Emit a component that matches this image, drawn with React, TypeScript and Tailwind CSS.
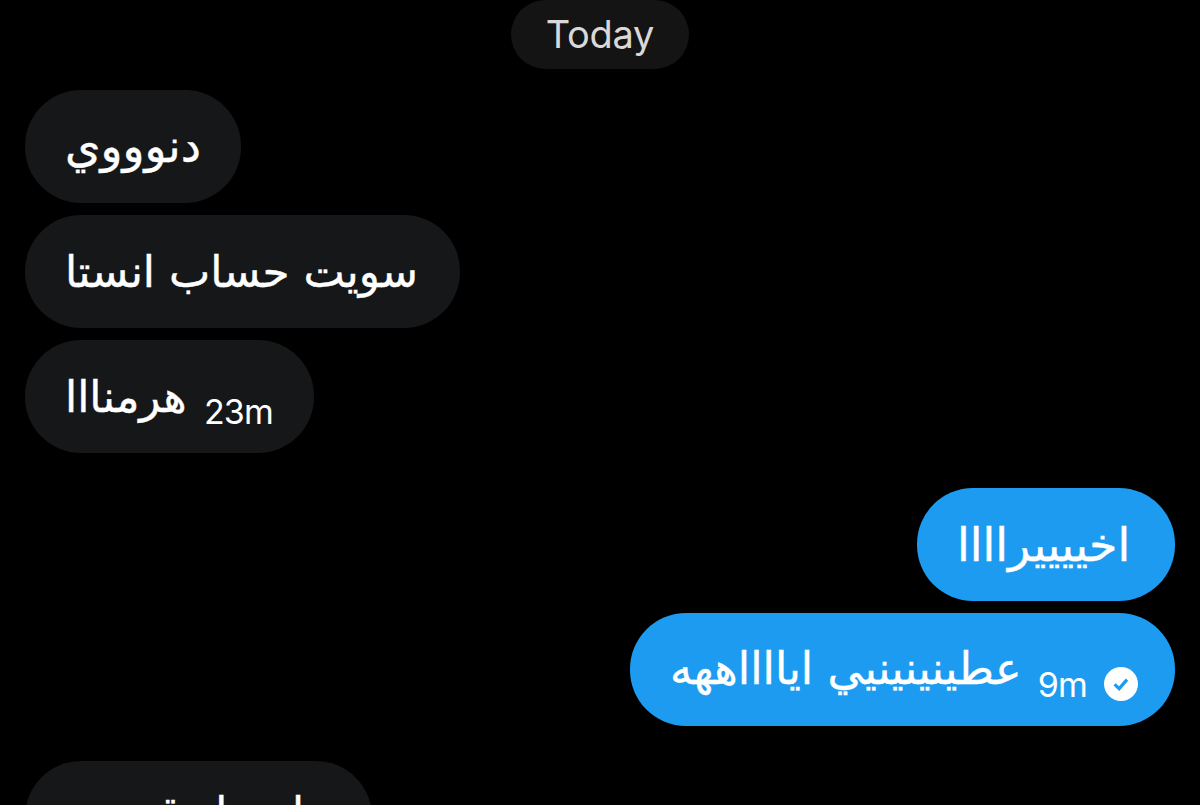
import React from "react";

interface Message {
  text: string;
  mine?: boolean;
  time?: string;
  box: string;
  size: string;
}

const messages: Message[] = [
  { text: "دنوووي", box: "w-[216px]", size: "text-[45.5px]" },
  { text: "سويت حساب انستا", box: "w-[435px] mt-3", size: "text-[43.8px]" },
  { text: "هرمنااا", time: "23m", box: "w-[289px] mt-3", size: "text-[43.8px]" },
  { text: "اخييييراااا", mine: true, box: "w-[258px] mt-[35px]", size: "text-[46px]" },
  { text: "عطينينينيي ايااااههه", mine: true, time: "9m", box: "w-[545px] mt-3", size: "text-[44.5px]" },
  { text: "تعا سبا وقسيت", box: "w-[347px] mt-[35px] pb-2", size: "text-[43.5px]" },
];

function Bubble({ text, mine, time, box, size }: Message) {
  return (
    <div
      className={`flex h-[113px] shrink-0 items-center rounded-[56px] pl-[40px] text-white ${box} ${
        mine ? "self-end bg-[#1d9bf0]" : "self-start bg-[#161719]"
      }`}
    >
      <span
        dir="rtl"
        className={`whitespace-nowrap font-['DejaVu_Sans',sans-serif] leading-none [-webkit-text-stroke:0.4px_white] ${size}`}
      >
        {text}
      </span>
      {time && (
        <span className="ml-auto mt-[30px] text-[34px] leading-none tracking-[-0.8px]">{time}</span>
      )}
      {time && !mine && <span className="w-[41px]" />}
      {mine && time && (
        <svg viewBox="0 0 34 34" className="ml-[17px] mr-[37px] mt-7 size-[34px] shrink-0">
          <circle cx="17" cy="17" r="17" fill="white" />
          <path d="M10.6 17.3l4.6 4.3 7.8-9" fill="none" stroke="#1d9bf0" strokeWidth="3.2" />
        </svg>
      )}
    </div>
  );
}

export default function App() {
  return (
    <div className="flex h-[805px] flex-col overflow-hidden bg-black px-[25px] font-['Inter',sans-serif]">
      <div className="mb-[21px] flex h-[69px] w-[178px] shrink-0 items-center justify-center self-center rounded-[35px] bg-[#141414] text-[38px] tracking-[-0.3px] text-[#d9d9d9]">
        Today
      </div>
      {messages.map((m) => (
        <Bubble key={m.text} {...m} />
      ))}
    </div>
  );
}
